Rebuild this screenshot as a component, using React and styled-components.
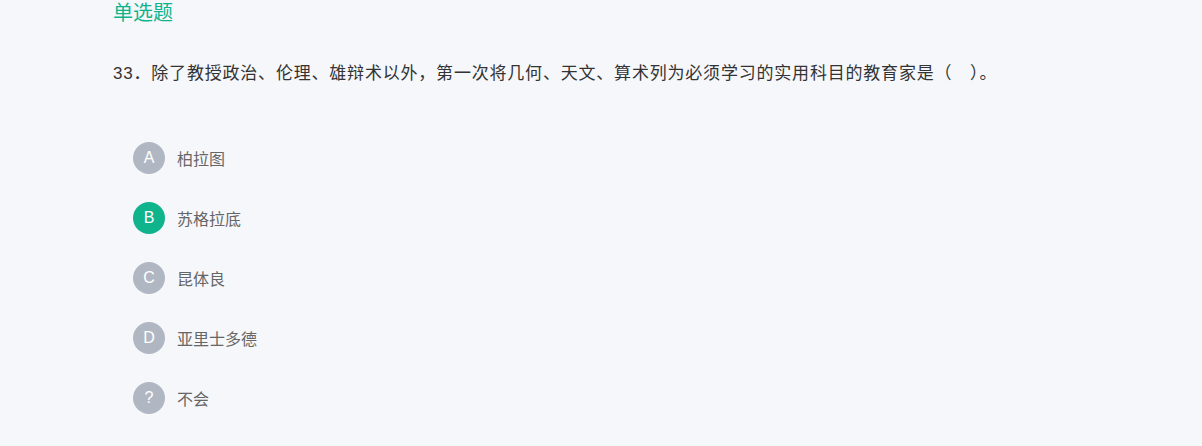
import React from 'react';
import styled, {createGlobalStyle} from 'styled-components';

const green = '#0fb48c';
const grey = '#b1b7c2';

const GlobalStyle = createGlobalStyle`
  html, body {
    margin: 0;
    padding: 0;
    background: #f6f7fb;
  }
  body {
    font-family: "Liberation Sans", "Noto Sans CJK SC", sans-serif;
  }
`;

const Page = styled.div`
  min-height: 446px;
  padding: 0 0 0 113px;
  box-sizing: border-box;
  background: #f6f7fb;
`;

const Title = styled.h3`
  margin: 0;
  padding-top: 1px;
  font-size: 20px;
  line-height: 24px;
  font-weight: normal;
  color: ${green};
`;

const Question = styled.p`
  margin: 35px 0 0;
  font-size: 17px;
  line-height: 28px;
  color: #333;
  letter-spacing: 0.8px;
`;

const Options = styled.ul`
  list-style: none;
  margin: 54px 0 0;
  padding: 0 0 0 20px;
  display: flex;
  flex-direction: column;
  gap: 28px;
`;

const Option = styled.li`
  display: flex;
  align-items: center;
  height: 32px;
  gap: 12px;
  cursor: pointer;
`;

const Badge = styled.span`
  width: 32px;
  height: 32px;
  border-radius: 50%;
  background: ${({$active}) => ($active ? green : grey)};
  color: #fff;
  font-size: 16px;
  display: flex;
  align-items: center;
  justify-content: center;
`;

const Label = styled.span`
  font-size: 16px;
  color: #666;
`;

const options = [
  {key: 'A', text: '柏拉图'},
  {key: 'B', text: '苏格拉底', active: true},
  {key: 'C', text: '昆体良'},
  {key: 'D', text: '亚里士多德'},
  {key: '?', text: '不会'},
];

export default function App() {
  return (
    <Page>
      <GlobalStyle />
      <Title>单选题</Title>
      <Question>
        33．除了教授政治、伦理、雄辩术以外，第一次将几何、天文、算术列为必须学习的实用科目的教育家是（　）。
      </Question>
      <Options>
        {options.map((o) => (
          <Option key={o.key}>
            <Badge $active={o.active}>{o.key}</Badge>
            <Label>{o.text}</Label>
          </Option>
        ))}
      </Options>
    </Page>
  );
}
